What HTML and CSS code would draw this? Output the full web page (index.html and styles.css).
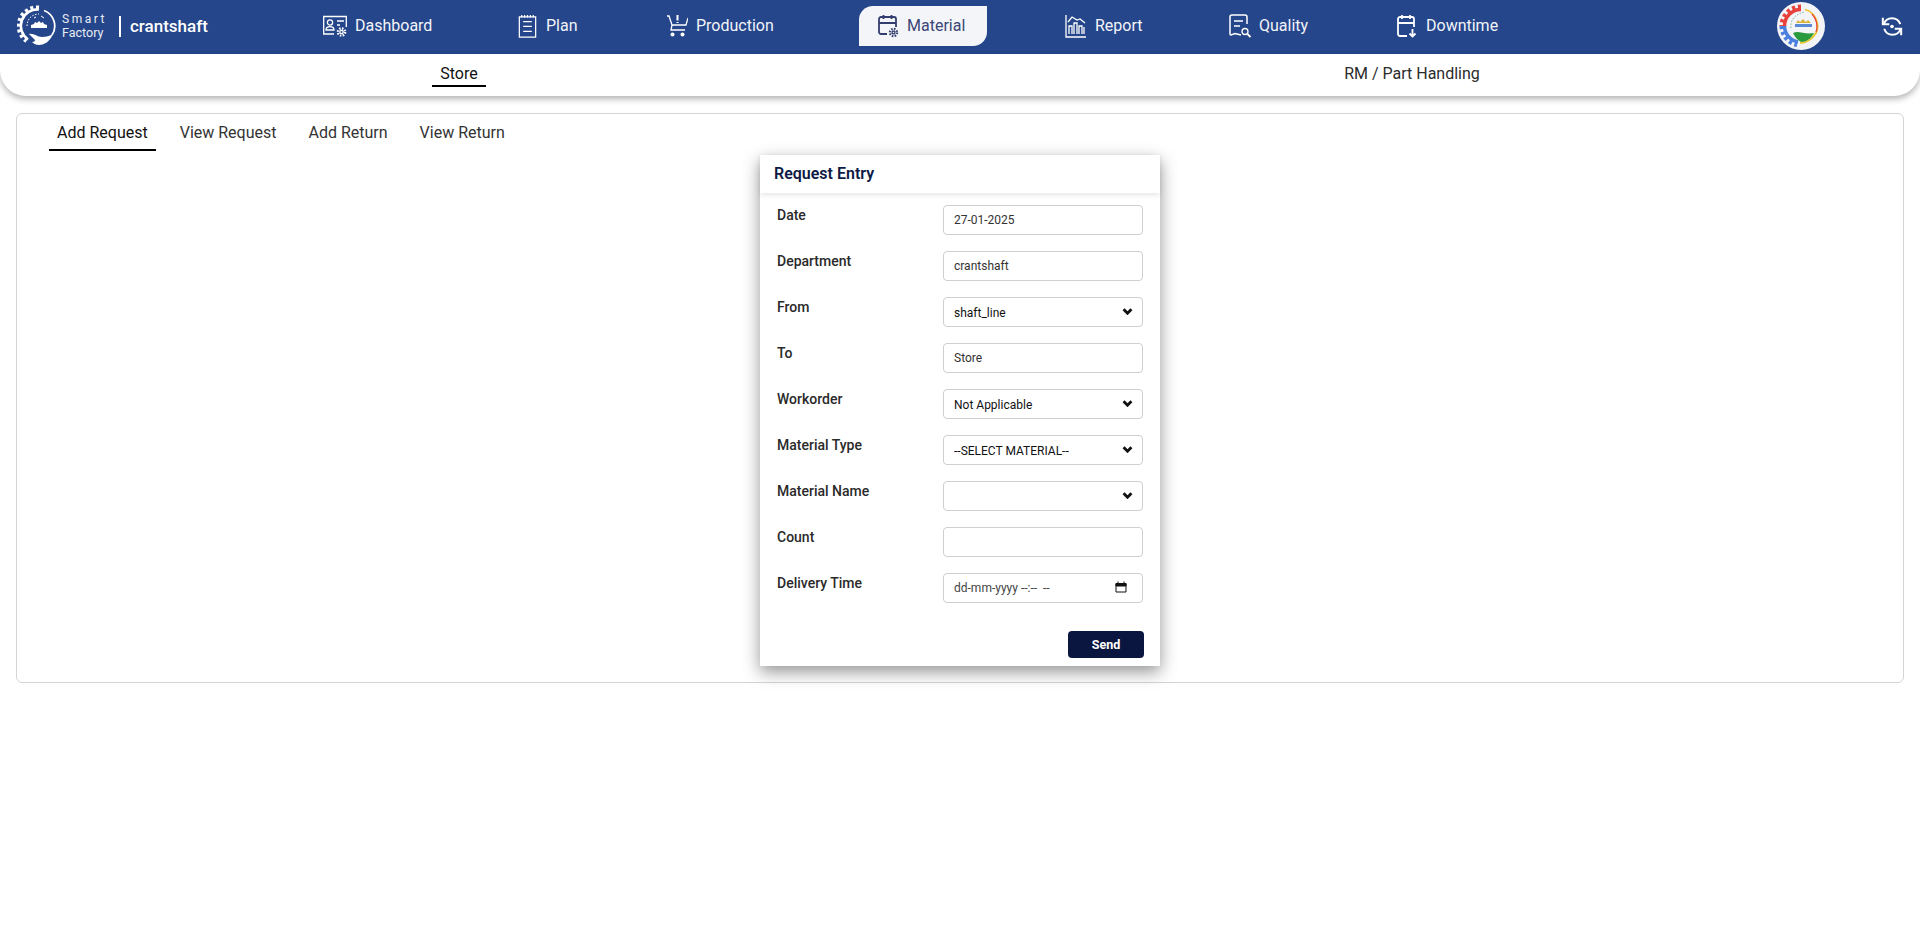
FILE: index.html
```html
<!DOCTYPE html>
<html lang="en">
<head>
  <meta charset="UTF-8" />
  <meta name="viewport" content="width=device-width, initial-scale=1.0" />
  <title>Smart Factory - Material</title>
  <link rel="stylesheet" href="styles.css">
</head>
<body>
  <header class="topbar">
    <div class="brand">
      <svg class="brand-logo" viewBox="0 0 40 42" fill="none" stroke="#fff">
        <path d="M22 4.500A16.500 16.500 0 0 0 11 34.500" stroke-width="2.600"/>
        <path d="M22 2.500A18.500 18.500 0 0 0 9.500 36" stroke-width="4" stroke-dasharray="3 2.700"/>
        <path d="M27 5.500A16.500 16.500 0 0 1 35 30" stroke-width="1.800"/>
        <path d="M12 29c5-1 8 3 13 3 4 0 8-1 11-3-3 7-8 11-14 11-3 0-5-1-7-3 2 0 3-1 3-2-2-2-4-4-6-6z" fill="#fff" stroke="none"/>
        <path d="M14 23v-3l3-1 1-2 2 1 2-2 2 2 2-1 1 2 3 1v3z" fill="#fff" stroke="none"/>
        <path d="M10 21c0-7 5-12 12-12" stroke-width="1" stroke-dasharray="1.500 1.500"/>
        <path d="M17 13l2-1M24 11l3 2" stroke-width="1"/>
      </svg>
      <div class="brand-name"><span class="brand-smart">Smart</span><span>Factory</span></div>
      <span class="brand-divider"></span>
      <span class="brand-dept">crantshaft</span>
    </div>

    <nav class="mainnav">
      <a class="mainnav-item">
        <svg class="icon icon-wide" viewBox="0 0 24 22"><path d="M11 19H.700V1.500h22.600V12"/><circle cx="7" cy="7.500" r="2.600"/><path d="M3 15c0-4.500 8-4.500 8 0zM14 6h7M14 10h3"/><circle cx="18.500" cy="17" r="1.700"/><circle cx="18.500" cy="17" r="3.600" stroke-width="2.400" stroke-dasharray="1.500 1.330"/></svg>
        Dashboard
      </a>
      <a class="mainnav-item">
        <svg class="icon icon-narrow" viewBox="0 0 20 25"><path d="M1.500 3h17v21h-17zM4 1v3M7 1v3M10 1v3M13 1v3M16 1v3M5.500 8h9M5.500 13h9M5.500 18h9"/></svg>
        Plan
      </a>
      <a class="mainnav-item">
        <svg class="icon" viewBox="0 0 22 24"><path d="M1 2h2l3 9h14l2-7M6 11l-1 5h14"/><path d="M11.500 1v5.500M11.500 8v1" stroke-width="2"/><circle cx="6.500" cy="20.500" r="2" fill="#fff" stroke="none"/><circle cx="16.500" cy="20.500" r="2" fill="#fff" stroke="none"/></svg>
        Production
      </a>
      <a class="mainnav-item is-active">
        <svg class="icon" viewBox="0 0 20 24"><path d="M9 20H3a2 2 0 0 1-2-2V5a2 2 0 0 1 2-2h13a2 2 0 0 1 2 2v8M1 9h17M5.500 1v4M13.500 1v4" stroke-width="1.800"/><circle cx="15.500" cy="18.500" r="1.400"/><circle cx="15.500" cy="18.500" r="3.500" stroke-width="2.400" stroke-dasharray="1.500 1.250"/></svg>
        Material
      </a>
      <a class="mainnav-item">
        <svg class="icon" viewBox="0 0 22 24"><path d="M1 1v22h20M4 20V12h3v8M9 20V9h3v11M14 20v-8h3v8M19 20v-7M3 8l4-5 5 3 3-1 5 4"/></svg>
        Report
      </a>
      <a class="mainnav-item">
        <svg class="icon" viewBox="0 0 22 24"><path d="M12 21 6 19.500 2 21a1 1 0 0 1-1-1V3a2 2 0 0 1 2-2h13a2 2 0 0 1 2 2v7M5 7h9M5 12h6" stroke-width="1.500"/><circle cx="16" cy="17.500" r="3"/><path d="m18.500 20 3 3" stroke-width="1.800"/></svg>
        Quality
      </a>
      <a class="mainnav-item">
        <svg class="icon" viewBox="0 0 20 24"><path d="M10 22H3a2 2 0 0 1-2-2V5a2 2 0 0 1 2-2h12a2 2 0 0 1 2 2v8M1 9h16M5 1v4M13 1v4" stroke-width="1.800"/><path d="M15.500 15v7M12.500 19.500l3 3 3-3" stroke-width="1.800"/></svg>
        Downtime
      </a>
    </nav>

    <div class="topbar-right">
      <svg class="avatar" viewBox="0 0 48 48" fill="none">
        <circle cx="24" cy="24" r="24" fill="#f3f4f8"/>
        <path d="M24 7.500A16.500 16.500 0 0 0 7.500 24" stroke="#e8413b" stroke-width="3.500"/>
        <path d="M24 4.500A19.500 19.500 0 0 0 4.500 24" stroke="#e8413b" stroke-width="4" stroke-dasharray="3.200 2.700"/>
        <path d="M7.500 24A16.500 16.500 0 0 0 21 40" stroke="#4a7fe0" stroke-width="3.500"/>
        <path d="M4.500 24A19.500 19.500 0 0 0 20 43" stroke="#4a7fe0" stroke-width="4" stroke-dasharray="3.200 2.700"/>
        <path d="M28 7.500c11 3 15 15 11 24" stroke="#eec22e" stroke-width="1.800"/>
        <path d="M35 12c5 5 6 13 4 18" stroke="#e8413b" stroke-width="1.200"/>
        <path d="M39 31c-4 6-9 10-16 10" stroke="#e8c62e" stroke-width="2"/>
        <path d="M16 31c6-3 11 2 21 0-3 6-8 9-13 9-4-2-6-5-8-9z" fill="#2a9a3e"/>
        <path d="M18 22h17v3H18z" fill="#5b8bd6"/>
        <path d="M19 21l2-3 2 2 3-3 3 3 2-2 3 3z" fill="#d9b43c"/>
        <path d="M14 26c-1-8 4-14 14-16" stroke="#7fb59a" stroke-width="1" stroke-dasharray="1.500 1.500"/>
      </svg>
      <svg class="refresh" viewBox="0 0 24 24" fill="none" stroke="#fff" stroke-width="2.200">
        <path d="M3 10a9.500 9.500 0 0 1 18 0M21.500 15a9.500 9.500 0 0 1-18 0"/>
        <path d="M2 3v7h7"/><path d="M22 22v-7h-7"/>
        <circle cx="12" cy="12.500" r="2" fill="#fff" stroke="none"/>
      </svg>
    </div>
  </header>

  <div class="subnav">
    <div class="subnav-cell"><a class="subnav-link is-active">Store</a></div>
    <div class="subnav-cell"><a class="subnav-link">RM / Part Handling</a></div>
  </div>

  <main class="content">
    <section class="card">
      <div class="tabs">
        <a class="tab is-active">Add Request</a>
        <a class="tab">View Request</a>
        <a class="tab">Add Return</a>
        <a class="tab">View Return</a>
      </div>

      <form class="entry">
        <h2 class="entry-title">Request Entry</h2>
        <div class="entry-body">
          <div class="field">
            <label>Date</label>
            <input class="control" type="text" value="27-01-2025" />
          </div>
          <div class="field">
            <label>Department</label>
            <input class="control" type="text" value="crantshaft" />
          </div>
          <div class="field">
            <label>From</label>
            <div class="select-wrap">
              <select class="control"><option>shaft_line</option></select>
              <svg class="chevron" viewBox="0 0 12 8"><path d="M1.500 1.500 6 6l4.500-4.500"/></svg>
            </div>
          </div>
          <div class="field">
            <label>To</label>
            <input class="control" type="text" value="Store" />
          </div>
          <div class="field">
            <label>Workorder</label>
            <div class="select-wrap">
              <select class="control"><option>Not Applicable</option></select>
              <svg class="chevron" viewBox="0 0 12 8"><path d="M1.500 1.500 6 6l4.500-4.500"/></svg>
            </div>
          </div>
          <div class="field">
            <label>Material Type</label>
            <div class="select-wrap">
              <select class="control"><option>--SELECT MATERIAL--</option></select>
              <svg class="chevron" viewBox="0 0 12 8"><path d="M1.500 1.500 6 6l4.500-4.500"/></svg>
            </div>
          </div>
          <div class="field">
            <label>Material Name</label>
            <div class="select-wrap">
              <select class="control"><option></option></select>
              <svg class="chevron" viewBox="0 0 12 8"><path d="M1.500 1.500 6 6l4.500-4.500"/></svg>
            </div>
          </div>
          <div class="field">
            <label>Count</label>
            <input class="control" type="text" />
          </div>
          <div class="field">
            <label>Delivery Time</label>
            <div class="select-wrap">
              <input class="control control-date" type="text" value="dd-mm-yyyy --:--  --" />
              <svg class="calendar" viewBox="0 0 12 12"><path d="M1 2.500h10v8.500H1zM3 .5v2M9 .5v2"/><path d="M1 2.500h10v2.500H1z" fill="#111"/></svg>
            </div>
          </div>
          <div class="entry-actions">
            <button class="send" type="button">Send</button>
          </div>
        </div>
      </form>
    </section>
  </main>
</body>
</html>
```

FILE: styles.css
```css
* {
  box-sizing: border-box;
}

body {
  margin: 0;
  background: #fff;
  color: #222;
  font-family: Roboto, "Liberation Sans", sans-serif;
  font-size: 16px;
}

/* top bar */
.topbar {
  height: 54px;
  display: flex;
  align-items: center;
  padding-bottom: 2px;
  background: #25468a;
  color: #fff;
}

.brand {
  width: 305px;
  display: flex;
  align-items: center;
  padding-left: 17px;
}

.brand-logo {
  width: 40px;
  height: 42px;
  flex: none;
}

.brand-name {
  display: flex;
  flex-direction: column;
  margin-left: 5px;
  font-size: 12.500px;
  line-height: 14px;
  color: #e8ecf5;
}

.brand-smart {
  font-size: 12px;
  letter-spacing: 2.500px;
}

.brand-divider {
  width: 2px;
  height: 21px;
  margin: 0 9px 0 12px;
  background: #fff;
}

.brand-dept {
  font-size: 17px;
  font-weight: 500;
}

.mainnav {
  display: grid;
  grid-template-columns: 194px 149px 211px 188px 164px 167px auto;
  align-items: center;
}

.mainnav-item {
  justify-self: start;
  height: 40px;
  display: flex;
  align-items: center;
  gap: 8px;
  padding: 0 22px 2px 18px;
  color: #f2f4fa;
  white-space: nowrap;
}

.mainnav-item.is-active {
  background: #f4f5f9;
  color: #3a4676;
  border-radius: 14px 0 14px 0;
}

.icon {
  height: 24px;
  width: 22px;
  margin-top: 2px;
  flex: none;
  fill: none;
  stroke: #fff;
  stroke-width: 1.300;
}

.icon-wide {
  width: 24px;
}

.icon-narrow {
  width: 21px;
}

.is-active .icon {
  stroke: #333e6e;
}

.topbar-right {
  margin-left: auto;
  display: flex;
  align-items: center;
  gap: 56px;
  padding-right: 17px;
}

.avatar {
  width: 48px;
  height: 48px;
}

.refresh {
  width: 22px;
  height: 22px;
}

/* second level nav */
.subnav {
  height: 42px;
  display: grid;
  grid-template-columns: 918px 988px;
  background: #fff;
  border-radius: 0 0 26px 26px;
  box-shadow: 0 3px 6px rgba(0, 0, 0, 0.3);
}

.subnav-cell {
  display: flex;
  justify-content: center;
}

.subnav-link {
  height: 33px;
  padding: 10px 8px 0;
  line-height: 20px;
  color: #2b2b2b;
}

.subnav-link.is-active {
  border-bottom: 2px solid #000;
  color: #111;
}

/* content */
.content {
  padding: 17px 16px;
}

.card {
  height: 570px;
  border: 1px solid #d5d5d5;
  border-radius: 6px;
  padding: 1px 0 0 32px;
}

.tabs {
  display: flex;
  gap: 16px;
  height: 36px;
}

.tab {
  height: 36px;
  padding: 8px 8px 0;
  line-height: 20px;
  color: #333;
}

.tab.is-active {
  border-bottom: 2px solid #000;
  color: #111;
}

/* request form */
.entry {
  width: 400px;
  margin: 4px 0 0 711px;
  background: #fff;
  box-shadow: 0 6px 16px rgba(0, 0, 0, 0.42);
}

.entry-title {
  height: 38px;
  margin: 0;
  padding-left: 14px;
  font-size: 16px;
  font-weight: 600;
  line-height: 37px;
  color: #0d1a45;
  box-shadow: 0 2px 5px rgba(0, 0, 0, 0.1);
}

.entry-body {
  padding: 12px 16px 8px 17px;
}

.field {
  display: flex;
  height: 30px;
  margin-bottom: 16px;
  padding-right: 1px;
}

.field label {
  width: 166px;
  font-size: 14px;
  font-weight: 500;
  line-height: 20px;
  color: #2a2a2a;
}

.select-wrap {
  position: relative;
  width: 200px;
  height: 30px;
}

.control {
  display: block;
  width: 200px;
  height: 30px;
  padding: 0 10px;
  border: 1px solid #cfcfcf;
  border-radius: 4px;
  background: #fff;
  font-family: Roboto, "Liberation Sans", sans-serif;
  font-size: 12px;
  color: #333;
  appearance: none;
  outline: none;
}

select.control {
  padding-top: 1px;
  color: #111;
}

.control-date {
  color: #444;
}

.chevron {
  position: absolute;
  top: 11px;
  right: 10px;
  width: 11px;
  height: 7px;
  fill: none;
  stroke: #111;
  stroke-width: 3.200;
}

.calendar {
  position: absolute;
  top: 8px;
  right: 16px;
  width: 12px;
  height: 12px;
  fill: none;
  stroke: #111;
  stroke-width: 1;
}

.entry-actions {
  display: flex;
  justify-content: flex-end;
  margin-top: 28px;
}

.send {
  width: 76px;
  height: 27px;
  border: 0;
  border-radius: 4px;
  background: #0b1640;
  color: #fff;
  font-family: Roboto, "Liberation Sans", sans-serif;
  font-size: 12.500px;
  font-weight: 700;
}
```
